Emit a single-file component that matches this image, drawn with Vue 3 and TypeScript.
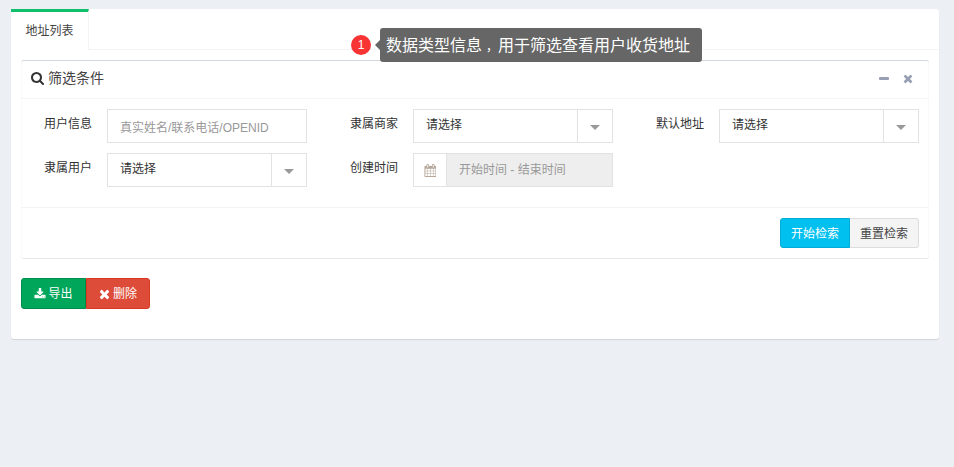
<script setup lang="ts">
const selectText = '请选择'
</script>

<template>
  <div class="page">
    <div class="card">
      <div class="tabs">
        <div class="tab">地址列表</div>
      </div>
      <div class="tab-body">
        <section class="box">
          <header class="box-head">
            <svg class="i-search" viewBox="0 0 1664 1664"><path d="M1152 704q0-185-131.500-316.500t-316.500-131.500-316.500 131.500-131.500 316.500 131.500 316.500 316.500 131.500 316.500-131.500 131.500-316.500zm512 832q0 52-38 90t-90 38q-54 0-90-38l-343-342q-179 124-399 124-143 0-273.500-55.500t-225-150-150-225-55.500-273.500 55.500-273.500 150-225 225-150 273.500-55.500 273.500 55.500 225 150 150 225 55.500 273.500q0 220-124 399l343 343q37 37 37 90z"/></svg>
            <span class="box-title">筛选条件</span>
            <span class="tools">
              <span class="i-minus"></span>
              <svg class="i-close" viewBox="0 0 1408 1792"><path d="M1298 1322q0 40-28 68l-136 136q-28 28-68 28t-68-28l-294-294-294 294q-28 28-68 28t-68-28l-136-136q-28-28-28-68t28-68l294-294-294-294q-28-28-28-68t28-68l136-136q28-28 68-28t68 28l294 294 294-294q28-28 68-28t68 28l136 136q28 28 28 68t-28 68l-294 294 294 294q28 28 28 68z"/></svg>
            </span>
          </header>

          <div class="form">
            <div class="field">
              <label>用户信息</label>
              <div class="control input placeholder">真实姓名/联系电话/OPENID</div>
            </div>
            <div class="field">
              <label>隶属商家</label>
              <div class="control select"><span class="value">{{ selectText }}</span><span class="caret-box"><i class="caret"></i></span></div>
            </div>
            <div class="field">
              <label>默认地址</label>
              <div class="control select"><span class="value">{{ selectText }}</span><span class="caret-box"><i class="caret"></i></span></div>
            </div>
            <div class="field">
              <label>隶属用户</label>
              <div class="control select"><span class="value">{{ selectText }}</span><span class="caret-box"><i class="caret"></i></span></div>
            </div>
            <div class="field">
              <label>创建时间</label>
              <div class="control range">
                <span class="addon">
                  <svg class="i-cal" viewBox="0 0 1664 1792"><path d="M192 1664h288v-288h-288v288zm352 0h320v-288h-320v288zm-352-352h288v-320h-288v320zm352 0h320v-320h-320v320zm-352-384h288v-288h-288v288zm736 736h320v-288h-320v288zm-384-736h320v-288h-320v288zm768 736h288v-288h-288v288zm-384-352h320v-320h-320v320zm-352-864v-288q0-13-9.500-22.500t-22.500-9.500h-64q-13 0-22.500 9.500t-9.500 22.500v288q0 13 9.500 22.500t22.500 9.500h64q13 0 22.500-9.500t9.500-22.500zm736 864h288v-320h-288v320zm-384-384h320v-288h-320v288zm384 0h288v-288h-288v288zm32-480v-288q0-13-9.500-22.500t-22.500-9.500h-64q-13 0-22.500 9.500t-9.500 22.500v288q0 13 9.500 22.500t22.500 9.500h64q13 0 22.500-9.500t9.500-22.500zm384-64v1280q0 52-38 90t-90 38h-1408q-52 0-90-38t-38-90v-1280q0-52 38-90t90-38h128v-96q0-66 47-113t113-47h64q66 0 113 47t47 113v96h384v-96q0-66 47-113t113-47h64q66 0 113 47t47 113v96h128q52 0 90 38t38 90z"/></svg>
                </span>
                <span class="range-text">开始时间 - 结束时间</span>
              </div>
            </div>
          </div>

          <footer class="box-foot">
            <button class="btn info"><span class="lift">开始检索</span></button><button class="btn plain"><span class="lift">重置检索</span></button>
          </footer>
        </section>

        <div class="actions">
          <button class="btn success">
            <svg class="i-btn" viewBox="0 0 1792 1792"><path d="M1344 1344q0-26-19-45t-45-19-45 19-19 45 19 45 45 19 45-19 19-45zm256 0q0-26-19-45t-45-19-45 19-19 45 19 45 45 19 45-19 19-45zm128-224v320q0 40-28 68t-68 28h-1472q-40 0-68-28t-28-68v-320q0-40 28-68t68-28h465l135 136q58 56 136 56t136-56l136-136h464q40 0 68 28t28 68zm-325-569q17 41-14 70l-448 448q-18 19-45 19t-45-19l-448-448q-31-29-14-70 17-39 59-39h256v-448q0-26 19-45t45-19h256q26 0 45 19t19 45v448h256q42 0 59 39z"/></svg><span class="lift">导出</span>
          </button><button class="btn danger">
            <svg class="i-btn-x" viewBox="0 0 1408 1792"><path d="M1298 1322q0 40-28 68l-136 136q-28 28-68 28t-68-28l-294-294-294 294q-28 28-68 28t-68-28l-136-136q-28-28-28-68t28-68l294-294-294-294q-28-28-28-68t28-68l136-136q28-28 68-28t68 28l294 294 294-294q28-28 68-28t68 28l136 136q28 28 28 68t-28 68l-294 294 294 294q28 28 28 68z"/></svg><span class="lift">删除</span>
          </button>
        </div>
      </div>

      <div class="hint">
        <span class="badge">1</span>
        <span class="tip">数据类型信息<span class="comma">，</span>用于筛选查看用户收货地址</span>
      </div>
    </div>
  </div>
</template>

<style>
html, body { margin: 0; background: #ecf0f5; }
</style>

<style scoped>
.page {
  height: 467px;
  box-sizing: border-box;
  padding: 9px 15px 0 11px;
  background: #ecf0f5;
  font-family: "Liberation Sans", "Noto Sans CJK SC", sans-serif;
  font-size: 12px;
  color: #333;
  overflow: hidden;
}
.card {
  position: relative;
  height: 330px;
  background: #fff;
  border-radius: 3px;
  box-shadow: 0 1px 1px rgba(0, 0, 0, .12);
}
.tabs {
  height: 40px;
  border-bottom: 1px solid #f4f4f4;
  display: flex;
}
.tab {
  width: 77px;
  height: 38px;
  line-height: 39px;
  box-sizing: content-box;
  border-top: 3px solid #10bf6b;
  border-right: 1px solid #f4f4f4;
  background: #fff;
  text-align: center;
  color: #444;
}
.tab-body { padding: 10px 10px 0; }
.box {
  height: 199px;
  box-sizing: border-box;
  border-top: 1px solid #d2d6de;
  border-bottom: 1px solid #e8e8e8;
  border-radius: 3px;
  box-shadow: inset 1px 0 #fafafa, inset -1px 0 #fafafa;
  display: flex;
  flex-direction: column;
}
.box-head {
  height: 37px;
  box-sizing: content-box;
  border-bottom: 1px solid #f4f4f4;
  display: flex;
  align-items: center;
  padding: 0 16px 0 10px;
  color: #444;
}
.i-search { width: 13px; height: 13px; fill: #333; margin: 0 4px 2px 0; }
.box-title { font-size: 14px; position: relative; top: -3px; }
.tools { margin-left: auto; display: flex; align-items: center; gap: 14px; position: relative; top: -1px; }
.i-minus { width: 10px; height: 3px; border-radius: 1px; background: #97a0b3; }
.i-close { width: 10px; height: 13px; fill: #97a0b3; }
.form {
  padding: 10px 10px 0 0;
  display: grid;
  grid-template-columns: repeat(3, 286px);
  column-gap: 20px;
  row-gap: 10px;
  flex: 1;
  align-content: start;
}
.field { display: flex; gap: 15px; height: 34px; }
.field label { width: 71px; text-align: right; line-height: 31px; color: #333; }
.control {
  width: 200px;
  height: 34px;
  box-sizing: border-box;
  border: 1px solid #e2e2e2;
  display: flex;
  align-items: center;
}
.input { padding: 0 12px; }
.placeholder { color: #999; }
.value { flex: 1; padding-left: 12px; position: relative; top: -3px; }
.caret-box {
  width: 34px;
  height: 32px;
  border-left: 1px solid #e2e2e2;
  display: flex;
  align-items: center;
  justify-content: center;
}
.caret {
  width: 0;
  height: 0;
  border-left: 5px solid transparent;
  border-right: 5px solid transparent;
  border-top: 5px solid #999;
  margin-top: 2px;
}
.addon {
  width: 32px;
  height: 32px;
  border-right: 1px solid #e2e2e2;
  display: flex;
  align-items: center;
  justify-content: center;
}
.i-cal { width: 12px; height: 13px; fill: #b5a89a; }
.range-text {
  flex: 1;
  height: 32px;
  line-height: 32px;
  padding-left: 12px;
  background: #eee;
  color: #999;
}
.box-foot {
  height: 51px;
  box-sizing: border-box;
  border-top: 1px solid #f4f4f4;
  padding: 10px 10px 0 0;
  display: flex;
  justify-content: flex-end;
  align-items: flex-start;
}
.btn {
  font: inherit;
  height: 30px;
  padding: 0;
  box-sizing: border-box;
  border: 1px solid transparent;
  border-radius: 3px;
  cursor: pointer;
}
.lift { position: relative; top: -1px; }
.info {
  width: 70px;
  background: #00c0ef;
  border-color: #00acd6;
  color: #fff;
  border-radius: 3px 0 0 3px;
}
.plain {
  width: 69px;
  background: #f4f4f4;
  border-color: #ddd;
  border-left: 0;
  color: #444;
  border-radius: 0 3px 3px 0;
}
.actions { padding-top: 19px; display: flex; }
.actions .btn {
  height: 31px;
  color: #fff;
  display: flex;
  align-items: center;
  justify-content: center;
}
.success {
  width: 65px;
  background: #00a65a;
  border-color: #008d4c;
  border-radius: 3px 0 0 3px;
}
.danger {
  width: 64px;
  background: #dd4b39;
  border-color: #d73925;
  border-radius: 0 3px 3px 0;
}
.i-btn { width: 12px; height: 12px; fill: #fff; margin-right: 2px; }
.i-btn-x { width: 11px; height: 14px; fill: #fff; margin-right: 3px; }
.hint {
  position: absolute;
  left: 340px;
  top: 19px;
  display: flex;
  align-items: center;
}
.badge {
  width: 20px;
  height: 20px;
  border-radius: 50%;
  background: #f73333;
  color: #fff;
  text-align: center;
  line-height: 20px;
  margin-right: 9px;
}
.tip {
  position: relative;
  width: 322px;
  height: 34px;
  line-height: 36px;
  box-sizing: border-box;
  padding-left: 6px;
  background: #666;
  border-radius: 3px;
  color: #fff;
  font-size: 16px;
  white-space: nowrap;
}
.comma {
  display: inline-block;
  width: 16px;
  box-sizing: border-box;
  padding-left: 4px;
  font-size: 12px;
}
.tip::before {
  content: "";
  position: absolute;
  left: -5px;
  top: 12px;
  border-top: 5px solid transparent;
  border-bottom: 5px solid transparent;
  border-right: 5px solid #666;
}
</style>
